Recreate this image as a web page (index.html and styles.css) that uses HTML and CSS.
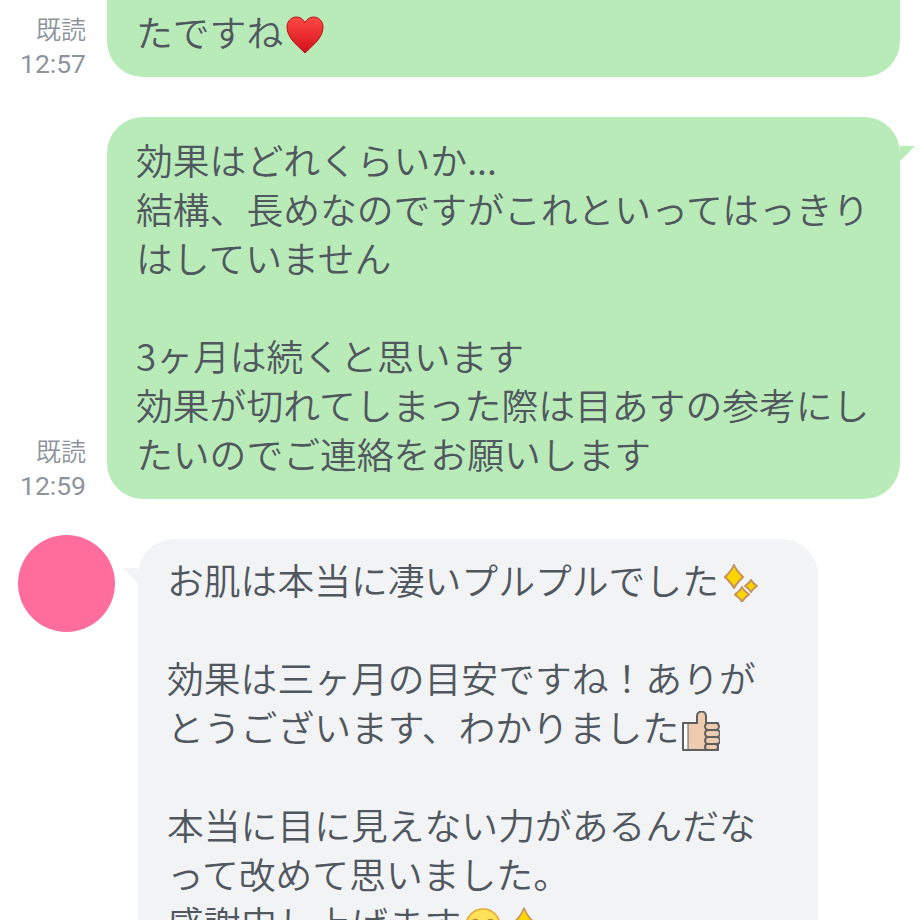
FILE: index.html
```html
<!DOCTYPE html>
<html lang="ja">
<head>
  <meta charset="UTF-8">
  <title>Chat</title>
  <link rel="stylesheet" href="styles.css">
</head>
<body>
  <div class="chat">
    <div class="row sent first">
      <div class="meta">既読<br><span class="time">12:57</span></div>
      <div class="bubble green">たですね<svg class="emoji" viewBox="0 0 38 38"><defs><linearGradient id="heartFill" x1="0" y1="0" x2="0" y2="1"><stop offset="0" stop-color="#ff4a42"/><stop offset="1" stop-color="#d3101c"/></linearGradient></defs><path d="M19 37C11 29 1 22 1 11 1 5 5.500 1 10.500 1 14 1 17 3 19 6.500 21 3 24 1 27.500 1 32.500 1 37 5 37 11 37 22 27 29 19 37z" fill="url(#heartFill)" stroke="#b5141c" stroke-width="1"/></svg></div>
    </div>
    <div class="row sent">
      <div class="meta">既読<br><span class="time">12:59</span></div>
      <div class="bubble green tail-right">効果はどれくらいか...<br>結構、長めなのですがこれといってはっきり<br>はしていません<br><br>3ヶ月は続くと思います<br>効果が切れてしまった際は目あすの参考にし<br>たいのでご連絡をお願いします</div>
    </div>
    <div class="row received">
      <div class="avatar"></div>
      <div class="bubble gray tail-left">お肌は本当に凄いプルプルでした<svg class="emoji" viewBox="0 0 38 38"><g fill="#ffd400" stroke="#c4925a" stroke-width="2" stroke-linejoin="round"><path d="M12 1C14 6 17 9 21 13 17 17 14 20 12 24 10 20 7 17 3 13 7 9 10 6 12 1z"/><path d="M20 23C21 26 24 28 27 30.500 24 33 21 35 20 38 19 35 16 33 13 30.500 16 28 19 26 20 23z"/><path d="M29 16C30 18 32 20 35 22 32 24 30 26 29 28 28 26 26 24 23 22 26 20 28 18 29 16z"/></g></svg><br><br>効果は三ヶ月の目安ですね！ありが<br>とうございます、わかりました<svg class="emoji thumb" viewBox="0 0 38 40"><path d="M1 12H15V5C15-1 24-1 24 5V12H36V39H1z" fill="#eccbb0" stroke="#5f5f5f" stroke-width="2" stroke-linejoin="round"/><path d="M2 13H6V38H2z" fill="#fff"/><path d="M6 12V39" stroke="#5f5f5f" stroke-width="1"/><g fill="#eccbb0" stroke="#5f5f5f" stroke-width="2"><rect x="23" y="12" width="14" height="7" rx="3.500"/><rect x="23" y="19" width="15" height="7" rx="3.500"/><rect x="23" y="26" width="15" height="7" rx="3.500"/><rect x="23" y="33" width="13" height="6" rx="3"/></g></svg><br><br>本当に目に見えない力があるんだな<br>って改めて思いました。<br>感謝申し上げます<svg class="emoji" viewBox="0 0 38 38"><circle cx="19" cy="19" r="17" fill="#ffe25a" stroke="#e8a52e" stroke-width="1.500"/><path d="M8 14q3-3 7 0M23 14q3-3 7 0" fill="none" stroke="#b98a30" stroke-width="1.500"/></svg><svg class="emoji" viewBox="0 0 38 38"><path d="M19 1C22 9 26 14 36 19 26 24 22 29 19 37 16 29 12 24 2 19 12 14 16 9 19 1z" fill="#ffd400" stroke="#c4925a" stroke-width="1.500" stroke-linejoin="round"/></svg></div>
    </div>
  </div>
</body>
</html>
```

FILE: styles.css
```css
:root {
  --green: #b8ebb8;
  --gray: #f2f3f5;
  --text: #50575f;
  --meta: #8e949b;
}

html, body {
  height: 100%;
}

body {
  margin: 0;
  background: #fff;
  color: var(--text);
  font-family: "Noto Sans CJK JP", "Noto Sans", sans-serif;
  font-weight: 350;
  overflow: hidden;
}

.chat {
  display: flex;
  flex-direction: column;
  gap: 40px;
  padding-right: 20px;
}

.row {
  display: flex;
}

.sent {
  align-items: flex-end;
  justify-content: flex-end;
}

.first .bubble {
  padding-top: 7px;
  border-top-left-radius: 0;
  border-top-right-radius: 0;
}

.meta {
  width: 86px;
  margin-right: 21px;
  margin-bottom: -4px;
  text-align: right;
  color: var(--meta);
  font-size: 25px;
  line-height: 34px;
  white-space: nowrap;
}

.time {
  font-family: Roboto, sans-serif;
  font-weight: 400;
  font-size: 26.500px;
}

.bubble {
  position: relative;
  box-sizing: border-box;
  font-size: 36.800px;
  line-height: 49px;
  white-space: nowrap;
}

.green {
  width: 793px;
  padding: 18px 29px 21px;
  background: var(--green);
  border-radius: 36px;
}

.gray {
  width: 680px;
  margin-top: 4px;
  padding: 16px 29px;
  background: var(--gray);
  border-radius: 36px;
}

.tail-right::after {
  content: "";
  position: absolute;
  top: 29px;
  right: -15px;
  border-top: 15px solid var(--green);
  border-right: 15px solid transparent;
}

.tail-left::before {
  content: "";
  position: absolute;
  top: 29px;
  left: -15px;
  border-top: 15px solid var(--gray);
  border-left: 15px solid transparent;
}

.received {
  margin-top: -4px;
  padding-left: 18px;
  gap: 23px;
}

.avatar {
  flex: none;
  width: 97px;
  height: 97px;
  border-radius: 50%;
  background: #ff6d9c;
}

.emoji {
  display: inline-block;
  width: 38px;
  height: 38px;
  margin-left: 3px;
  vertical-align: -7px;
}

.thumb {
  height: 40px;
  vertical-align: -9px;
}
```
